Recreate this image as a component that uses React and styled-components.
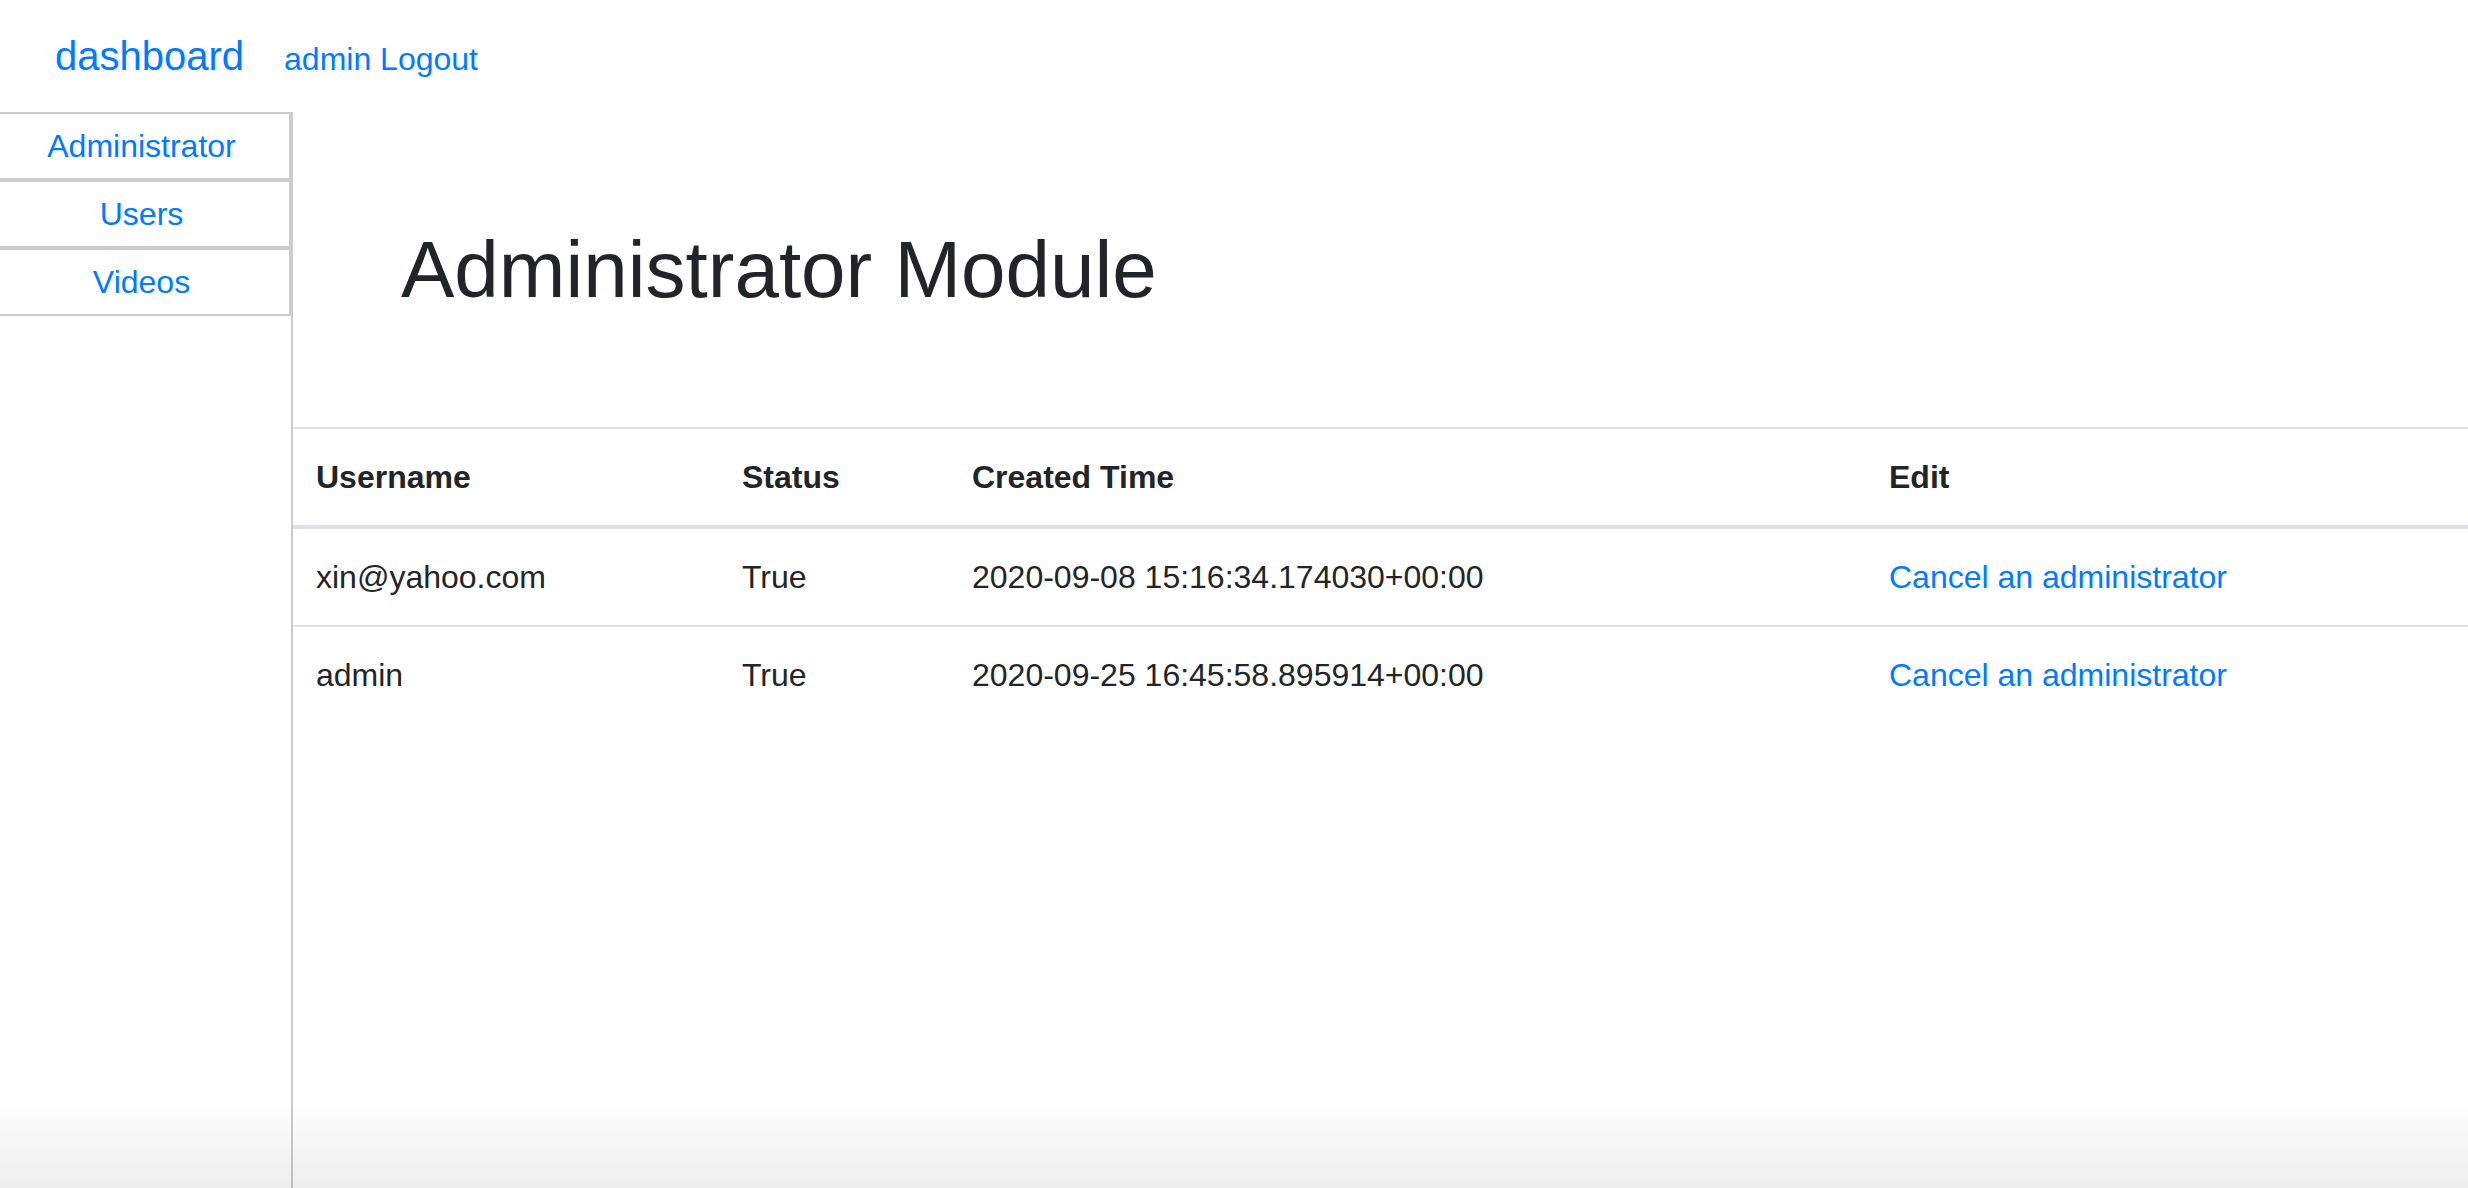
import React from "react";
import styled, { createGlobalStyle } from "styled-components";

const GlobalStyle = createGlobalStyle`
  html, body {
    margin: 0;
    padding: 0;
    background: #fff;
  }
  body {
    font-family: "Liberation Sans", Helvetica, Arial, sans-serif;
    color: #212529;
    overflow: hidden;
  }
  * {
    box-sizing: border-box;
  }
`;

const admins = [
  { username: "xin@yahoo.com", status: "True", created: "2020-09-08 15:16:34.174030+00:00" },
  { username: "admin", status: "True", created: "2020-09-25 16:45:58.895914+00:00" },
];

const menu = ["Administrator", "Users", "Videos"];

function App() {
  return (
    <Page>
      <GlobalStyle />
      <Navbar>
        <Brand href="#">dashboard</Brand>
        <NavLink href="#">admin Logout</NavLink>
      </Navbar>
      <Body>
        <Sidebar>
          {menu.map((m) => (
            <SideItem key={m} href="#">
              {m}
            </SideItem>
          ))}
        </Sidebar>
        <Main>
          <Title>Administrator Module</Title>
          <Table>
            <thead>
              <tr>
                <Th $w={426}>Username</Th>
                <Th $w={230}>Status</Th>
                <Th $w={917}>Created Time</Th>
                <Th>Edit</Th>
              </tr>
            </thead>
            <tbody>
              {admins.map((a) => (
                <tr key={a.username}>
                  <Td>{a.username}</Td>
                  <Td>{a.status}</Td>
                  <Td>{a.created}</Td>
                  <Td>
                    <Link href="#">Cancel an administrator</Link>
                  </Td>
                </tr>
              ))}
            </tbody>
          </Table>
        </Main>
      </Body>
      <BottomShade />
    </Page>
  );
}

const Page = styled.div`
  min-height: 100vh;
  display: flex;
  flex-direction: column;
`;

const Navbar = styled.nav`
  display: flex;
  align-items: center;
  height: 112px;
  padding: 16px 55px;
`;

const Brand = styled.a`
  font-size: 40px;
  line-height: 60px;
  padding: 10px 0;
  margin-right: 40px;
  color: #007bff;
  text-decoration: none;
`;

const NavLink = styled.a`
  font-size: 32px;
  line-height: 48px;
  color: #007bff;
  text-decoration: none;
  margin-top: 6px;
`;

const Body = styled.div`
  flex: 1;
  display: flex;
`;

const Sidebar = styled.div`
  width: 299px;
  margin-left: -8px;
  display: flex;
  flex-direction: column;
  flex-shrink: 0;
`;

const SideItem = styled.a`
  display: block;
  border: 2px solid #cccccc;
  padding: 8px;
  text-align: center;
  font-size: 32px;
  line-height: 48px;
  color: #007bff;
  text-decoration: none;
`;

const Main = styled.main`
  flex: 1;
  border-left: 2px solid #cccccc;
  min-height: calc(100vh - 112px);
`;

const Title = styled.h1`
  margin: 110px 0 109px 108px;
  font-size: 80px;
  line-height: 96px;
  font-weight: 400;
  color: #212529;
`;

const Table = styled.table`
  width: 100%;
  border-collapse: collapse;
  table-layout: fixed;
  font-size: 32px;
  line-height: 48px;
`;

const Th = styled.th`
  width: ${(p) => (p.$w ? `${p.$w}px` : "auto")};
  padding: 24px 23px;
  text-align: left;
  font-weight: 700;
  vertical-align: bottom;
  border-top: 2px solid #dee2e6;
  border-bottom: 4px solid #dee2e6;
`;

const Td = styled.td`
  padding: 24px 23px;
  vertical-align: top;
  border-top: 2px solid #dee2e6;
`;

const Link = styled.a`
  color: #007bff;
  text-decoration: none;
`;

const BottomShade = styled.div`
  position: fixed;
  left: 0;
  right: 0;
  bottom: 0;
  height: 90px;
  pointer-events: none;
  background: linear-gradient(to bottom, rgba(0, 0, 0, 0), rgba(0, 0, 0, 0.07));
`;

export default App;
